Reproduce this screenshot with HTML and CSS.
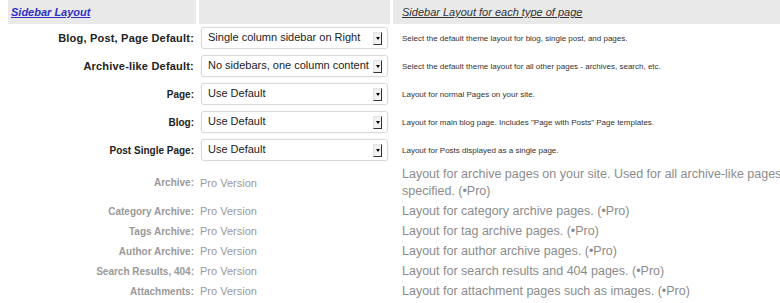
FILE: index.html
```html
<!DOCTYPE html>
<html lang="en">
<head>
<meta charset="UTF-8">
<meta name="viewport" content="width=device-width, initial-scale=1.0">
<title>Sidebar Layout</title>
<link rel="stylesheet" href="styles.css">
</head>
<body>
  <div id="layout-options">
    <div class="row head">
      <div class="cell"><a href="#" class="head-link">Sidebar Layout</a></div>
      <div class="cell"></div>
      <div class="cell desc"><span class="head-title">Sidebar Layout for each type of page</span></div>
    </div>

    <div class="row option">
      <div class="label big">Blog, Post, Page Default:</div>
      <div class="cell">
        <div class="select"><span>Single column sidebar on Right</span><span class="arrow"></span></div>
      </div>
      <div class="desc small">Select the default theme layout for blog, single post, and pages.</div>
    </div>
    <div class="row option">
      <div class="label big">Archive-like Default:</div>
      <div class="cell">
        <div class="select"><span>No sidebars, one column content</span><span class="arrow"></span></div>
      </div>
      <div class="desc small">Select the default theme layout for all other pages - archives, search, etc.</div>
    </div>
    <div class="row option">
      <div class="label">Page:</div>
      <div class="cell">
        <div class="select"><span>Use Default</span><span class="arrow"></span></div>
      </div>
      <div class="desc small">Layout for normal Pages on your site.</div>
    </div>
    <div class="row option">
      <div class="label">Blog:</div>
      <div class="cell">
        <div class="select"><span>Use Default</span><span class="arrow"></span></div>
      </div>
      <div class="desc small">Layout for main blog page. Includes "Page with Posts" Page templates.</div>
    </div>
    <div class="row option">
      <div class="label">Post Single Page:</div>
      <div class="cell">
        <div class="select"><span>Use Default</span><span class="arrow"></span></div>
      </div>
      <div class="desc small">Layout for Posts displayed as a single page.</div>
    </div>

    <div class="row pro">
      <div class="label">Archive:</div>
      <div class="cell pro-value">Pro Version</div>
      <div class="desc">Layout for archive pages on your site. Used for all archive-like pages unless specified. (&bull;Pro)</div>
    </div>
    <div class="row pro">
      <div class="label">Category Archive:</div>
      <div class="cell pro-value">Pro Version</div>
      <div class="desc">Layout for category archive pages. (&bull;Pro)</div>
    </div>
    <div class="row pro">
      <div class="label">Tags Archive:</div>
      <div class="cell pro-value">Pro Version</div>
      <div class="desc">Layout for tag archive pages. (&bull;Pro)</div>
    </div>
    <div class="row pro">
      <div class="label">Author Archive:</div>
      <div class="cell pro-value">Pro Version</div>
      <div class="desc">Layout for author archive pages. (&bull;Pro)</div>
    </div>
    <div class="row pro">
      <div class="label">Search Results, 404:</div>
      <div class="cell pro-value">Pro Version</div>
      <div class="desc">Layout for search results and 404 pages. (&bull;Pro)</div>
    </div>
    <div class="row pro">
      <div class="label">Attachments:</div>
      <div class="cell pro-value">Pro Version</div>
      <div class="desc">Layout for attachment pages such as images. (&bull;Pro)</div>
    </div>
  </div>
</body>
</html>
```

FILE: styles.css
```css
body {
  font-family: "Liberation Sans", Arial, sans-serif;
  margin: 0;
  padding: 0;
  background: #fff;
  overflow: hidden;
}

#layout-options {
  width: 844px;
  padding-left: 8px;
}

.row {
  display: grid;
  grid-template-columns: 188px 191px 449px;
  column-gap: 3px;
  align-items: center;
}

/* header */
.head {
  height: 24px;
  align-items: stretch;
}

.head .cell {
  background: #e9e9e9;
  display: flex;
  align-items: center;
}

.head-link {
  padding-left: 3px;
  font-size: 11px;
  font-weight: bold;
  font-style: italic;
  color: #3030c8;
}

.head-title {
  font-size: 11px;
  font-style: italic;
  text-decoration: underline;
  color: #333;
}

/* labels */
.label {
  text-align: right;
  padding-right: 2px;
  font-size: 10px;
  font-weight: bold;
  color: #222;
}

.label.big {
  font-size: 11px;
  letter-spacing: 0.2px;
}

.desc {
  padding-left: 9px;
}

.desc.small {
  font-size: 8px;
  color: #333;
}

/* select rows */
.option {
  height: 28px;
}

.select {
  box-sizing: border-box;
  height: 22px;
  margin: 0 2px 0 2px;
  padding: 0 5px 2px 6px;
  display: flex;
  align-items: center;
  justify-content: space-between;
  border: 1px solid #dadada;
  border-radius: 3px;
  box-shadow: 0 0 2px rgba(0, 0, 0, 0.08);
  background: #fff;
  font-size: 11px;
  color: #222;
  white-space: nowrap;
}

.arrow {
  box-sizing: border-box;
  width: 9px;
  height: 13px;
  margin-top: 2px;
  display: flex;
  align-items: center;
  justify-content: center;
  background: #f1f1f1;
  border-top: 1px solid #e2e2e2;
  border-left: 1px solid #e2e2e2;
  border-right: 1px solid #333;
  border-bottom: 1px solid #333;
}

.arrow::after {
  content: "";
  border-left: 2px solid transparent;
  border-right: 2px solid transparent;
  border-top: 3px solid #000;
}

/* pro rows */
.pro {
  padding: 1.5px 0;
}

.pro .label {
  color: #9a9a9a;
}

.pro-value {
  padding-left: 1px;
  font-size: 11px;
  color: #9a9a9a;
}

.pro .desc {
  font-size: 12.5px;
  line-height: 17px;
  color: #8c8c8c;
}
```
